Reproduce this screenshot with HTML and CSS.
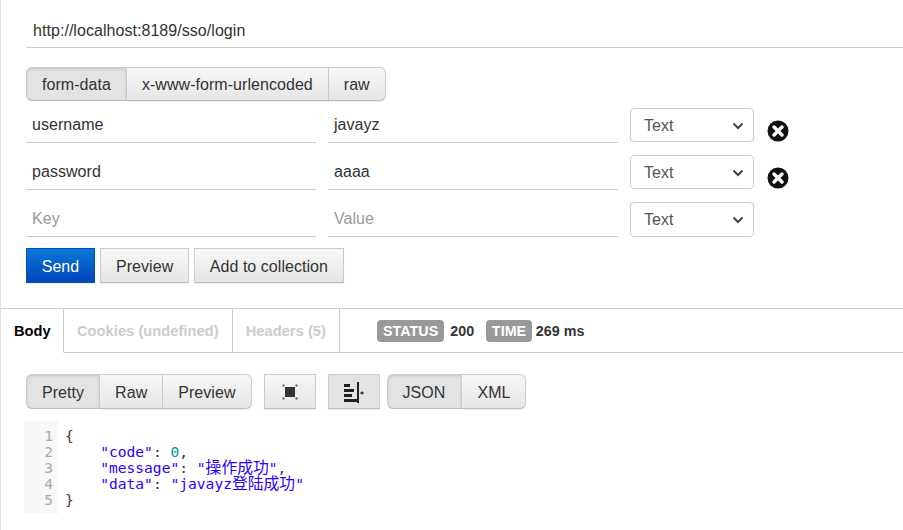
FILE: index.html
```html
<!DOCTYPE html>
<html lang="en">
<head>
<meta charset="utf-8">
<title>Request</title>
<link rel="stylesheet" href="styles.css">
</head>
<body>
<section class="request">
  <div class="url">http://localhost:8189/sso/login</div>
  <div class="btn-group modes">
    <button class="btn active">form-data</button>
    <button class="btn">x-www-form-urlencoded</button>
    <button class="btn">raw</button>
  </div>
  <div class="rows">
    <div class="row">
      <div class="field key">username</div>
      <div class="field val">javayz</div>
      <div class="select">Text<svg class="chev" viewBox="0 0 12 8"><path d="M1.5 1.5 6 6l4.500-4.500" /></svg></div>
      <svg class="del" viewBox="0 0 22 22"><circle cx="11" cy="11" r="10.500"/><path d="M7 7l8 8M15 7l-8 8"/></svg>
    </div>
    <div class="row">
      <div class="field key">password</div>
      <div class="field val">aaaa</div>
      <div class="select">Text<svg class="chev" viewBox="0 0 12 8"><path d="M1.5 1.5 6 6l4.500-4.500" /></svg></div>
      <svg class="del" viewBox="0 0 22 22"><circle cx="11" cy="11" r="10.500"/><path d="M7 7l8 8M15 7l-8 8"/></svg>
    </div>
    <div class="row">
      <div class="field key ph">Key</div>
      <div class="field val ph">Value</div>
      <div class="select tall">Text<svg class="chev" viewBox="0 0 12 8"><path d="M1.5 1.5 6 6l4.500-4.500" /></svg></div>
    </div>
  </div>
  <div class="actions">
    <button class="btn solo send">Send</button>
    <button class="btn solo">Preview</button>
    <button class="btn solo collect">Add to collection</button>
  </div>
</section>
<section class="response">
  <div class="tabs">
    <div class="tab current">Body</div>
    <div class="tab">Cookies (undefined)</div>
    <div class="tab">Headers (5)</div>
    <div class="meta">
      <span class="label">STATUS</span><span class="num">200</span>
      <span class="label time">TIME</span><span class="num tight">269 ms</span>
    </div>
  </div>
  <div class="toolbar">
    <div class="btn-group">
      <button class="btn active">Pretty</button>
      <button class="btn">Raw</button>
      <button class="btn">Preview</button>
    </div>
    <button class="btn solo icon">
      <svg viewBox="0 0 16 16" width="16" height="16"><rect x="3" y="3" width="10" height="10" fill="#333"/><g fill="#555"><rect x="0.500" y="0.500" width="2" height="2"/><rect x="13.500" y="0.500" width="2" height="2"/><rect x="0.500" y="13.500" width="2" height="2"/><rect x="13.500" y="13.500" width="2" height="2"/></g></svg>
    </button>
    <button class="btn solo icon pressed">
      <svg viewBox="0 0 22 22" width="22" height="22"><g fill="#222"><rect x="1" y="3" width="6" height="3"/><rect x="1" y="8" width="10" height="3"/><rect x="1" y="13" width="8" height="3"/><rect x="1" y="18" width="13" height="3"/><rect x="14" y="1" width="2" height="21"/><rect x="18" y="11.500" width="3" height="1"/><path d="M17 12l2.500-2v4z"/></g></svg>
    </button>
    <div class="btn-group">
      <button class="btn active json">JSON</button>
      <button class="btn">XML</button>
    </div>
  </div>
  <div class="code">
    <div class="gutter"><span>1</span><span>2</span><span>3</span><span>4</span><span>5</span></div>
    <pre class="src"><span class="br">{</span>
    <span class="str">"code"</span>: <span class="zero">0</span>,
    <span class="str">"message"</span>: <span class="str">"<span class="cjk">操作成功</span>"</span>,
    <span class="str">"data"</span>: <span class="str">"javayz<span class="cjk">登陆成功</span>"</span>
<span class="br">}</span></pre>
  </div>
</section>
</body>
</html>
```
FILE: styles.css
```css
* { box-sizing: border-box; }
html, body { margin: 0; padding: 0; }
body {
  width: 903px;
  height: 530px;
  overflow: hidden;
  background: #fff;
  border-left: 1px solid #e2e2e2;
  font-family: "Liberation Sans", Arial, sans-serif;
  font-size: 16px;
  letter-spacing: .05px;
  color: #333;
}
.request { padding: 14px 0 0 25px; height: 308px; }
.url {
  height: 34px;
  padding: 7px 7px 0;
  line-height: 19px;
  border-bottom: 1px solid #ccc;
}
.btn-group { display: inline-flex; }
.modes { display: flex; margin-top: 19px; }
.modes .btn { height: 34px; padding-top: 1px; }
.btn {
  height: 35px;
  padding: 2px 15px 0;
  font: inherit;
  letter-spacing: inherit;
  color: #333;
  background: linear-gradient(#f7f7f7, #e6e6e6);
  border: 1px solid #ccc;
  border-bottom-color: #bbb;
  border-left-width: 0;
  box-shadow: 0 1px 1px rgba(0,0,0,.06);
}
.btn-group .btn:first-child { border-left-width: 1px; border-radius: 6px 0 0 6px; }
.btn-group .btn:last-child { border-radius: 0 6px 6px 0; }
.btn.active { background: #e3e3e3; box-shadow: inset 0 1px 3px rgba(0,0,0,.12); }
.btn.json { padding-right: 16px; }
.rows { display: flex; flex-direction: column; gap: 12px; margin-top: 7px; }
.row { display: flex; align-items: flex-start; height: 35px; }
.field {
  height: 35px;
  padding: 7px 6px 0;
  line-height: 19px;
  border-bottom: 1px solid #ccc;
}
.key { width: 290px; margin-right: 12px; }
.val { width: 290px; margin-right: 12px; }
.ph { color: #999; }
.select {
  display: flex;
  justify-content: space-between;
  align-items: center;
  flex: none;
  width: 124px;
  height: 34px;
  padding: 1px 9px 0 13px;
  color: #555;
  border: 1px solid #ccc;
  border-radius: 4px;
  background: #fff;
}
.select.tall { height: 35px; }
.chev { width: 12px; height: 8px; fill: none; stroke: #444; stroke-width: 2; }
.del { width: 22px; height: 22px; margin: 12px 0 0 13px; }
.del circle { fill: #111; }
.del path { stroke: #fff; stroke-width: 3.500; stroke-linecap: round; }
.actions { display: flex; gap: 5px; margin-top: 11px; }
.solo { border-left-width: 1px; }
.btn.collect { padding: 2px 14.500px 0; }
.send {
  width: 69px;
  padding: 2px 0 0;
  color: #fff;
  border-color: #0055b8;
  background: linear-gradient(#0a78d6, #0044bb);
}
.response { border-top: 1px solid #ccc; }
.tabs {
  display: flex;
  align-items: center;
  height: 44px;
}
.tab {
  height: 44px;
  padding: 0 13px;
  line-height: 45px;
  font-size: 14.650px;
  font-weight: bold;
  color: #ccc;
  border-right: 1px solid #ccc;
  border-bottom: 1px solid #ccc;
}
.tab.current { width: 63px; color: #000; border-bottom-color: transparent; }
.meta {
  flex: 1;
  align-self: stretch;
  display: flex;
  align-items: center;
  padding-left: 37px;
  font-size: 14.300px;
  font-weight: bold;
  border-bottom: 1px solid #ccc;
}
.label {
  padding: 2px 6px;
  line-height: 18px;
  font-size: 14.300px;
  color: #fff;
  background: #999;
  border-radius: 4px;
}
.num { margin-left: 6px; }
.num.tight { margin-left: 4px; }
.time { margin-left: 12px; padding: 2px 5.500px; }
.toolbar {
  display: flex;
  gap: 12px;
  padding: 21px 0 0 25px;
}
.icon { width: 52px; padding: 0; display: flex; align-items: center; justify-content: center; }
.icon.pressed { background: #e3e3e3; }
.toolbar .icon.pressed + .btn-group { margin-left: -5px; }
.code {
  display: flex;
  margin: 12px 0 0 23px;
  font-family: "DejaVu Sans Mono", monospace;
  font-size: 14.600px;
  letter-spacing: 0;
  line-height: 16px;
}
.gutter {
  display: flex;
  flex-direction: column;
  width: 34px;
  height: 93px;
  padding: 7px 5px 0 0;
  text-align: right;
  color: #aaa;
  background: #f7f7f7;
}
.src { margin: 7px 0 0 7px; font: inherit; color: #333; }
.br { color: #5a2d2d; }
.str { color: #2a00ff; }
.zero { color: #098; }
.cjk { font-family: "Noto Sans CJK SC", sans-serif; font-size: 15.800px; line-height: 0; }
```
